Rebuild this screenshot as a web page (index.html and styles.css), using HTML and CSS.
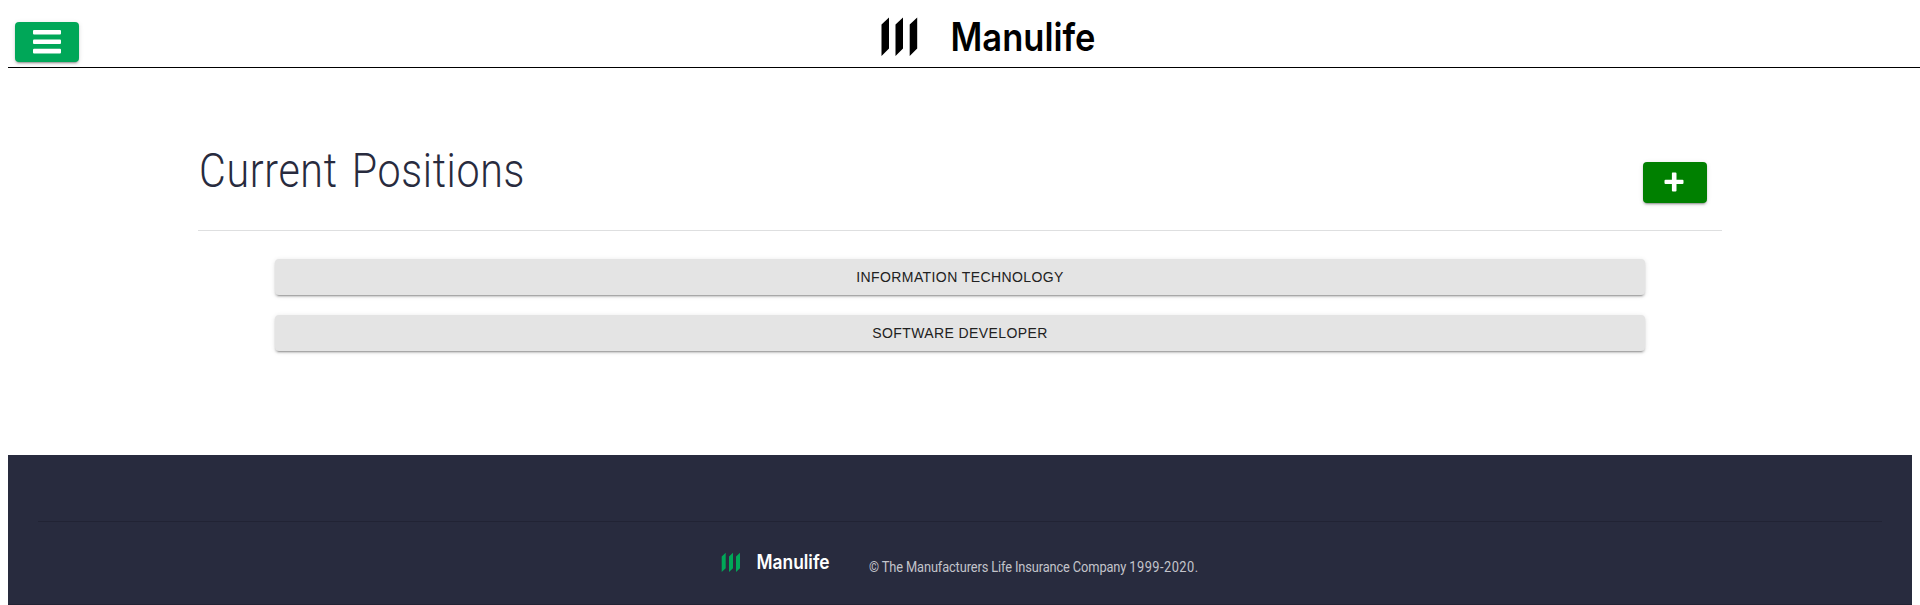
FILE: index.html
```html
<!DOCTYPE html>
<html lang="en">
<head>
<meta charset="utf-8">
<title>Current Positions</title>
<link rel="stylesheet" href="styles.css">
</head>
<body>
<header class="topbar">
  <button class="btn menu-btn" aria-label="Menu">
    <svg width="28" height="24" viewBox="0 0 28 24" fill="#fff"><rect width="28" height="4.6" rx="1"/><rect y="9.4" width="28" height="4.6" rx="1"/><rect y="18.8" width="28" height="4.6" rx="1"/></svg>
  </button>
  <svg class="logo" width="224" height="50" viewBox="0 0 224 50">
    <path d="M1.5 10.500L9 3.500V34.500L1.500 42ZM15.500 10.500L23 3.500V34.500L15.500 42ZM29.700 10.500L37.200 3.500V34.500L29.700 42Z"/>
    <text class="wordmark" x="70.500" y="37" font-size="39" textLength="145" lengthAdjust="spacingAndGlyphs">Manulife</text>
  </svg>
</header>
<main class="content">
  <div class="heading-row">
    <h1 class="title">Current Positions</h1>
    <button class="btn add-btn" aria-label="Add position">
      <svg width="20" height="20" viewBox="0 0 20 20" fill="#fff"><path d="M8.500 0.500H11.500Q12.500 0.500 12.500 1.500V7.700H18.500Q19.500 7.700 19.500 8.700V10.900Q19.500 11.900 18.500 11.900H12.500V18.500Q12.500 19.500 11.500 19.500H8.900Q7.900 19.500 7.900 18.500V11.900H1.500Q.5 11.900 .5 10.900V8.700Q.5 7.700 1.500 7.700H7.900V1.500Q7.900 .5 8.500 .5Z"/></svg>
    </button>
  </div>
  <div class="positions">
    <button class="position">Information Technology</button>
    <button class="position">Software Developer</button>
  </div>
</main>
<footer class="footer">
  <div class="footer-rule"></div>
  <div class="footer-row">
    <svg class="footer-logo" width="114" height="30" viewBox="0 0 114 30">
      <path fill="#00a758" d="M.700 5.500L4.700 1.700V17.200L.700 21ZM8 5.500L12 1.700V17.200L8 21ZM15 5.500L19 1.700V17.200L15 21Z"/>
      <text class="wordmark" fill="#fff" x="35.500" y="18" font-size="19.500" textLength="73" lengthAdjust="spacingAndGlyphs">Manulife</text>
    </svg>
    <span class="copyright">© The Manufacturers Life Insurance Company <span class="years">1999-2020.</span></span>
  </div>
</footer>
</body>
</html>
```
FILE: styles.css
```css
* { box-sizing: border-box; }
body { margin: 0; padding-left: 8px; height: 605px; overflow: hidden; background: #fff; }
button { border: 0; padding: 0; }
svg { overflow: visible; }
.topbar { height: 68px; border-bottom: 1px solid #000; display: grid; grid-template-columns: 872px 1fr; align-items: start; }
.btn { display: flex; align-items: center; justify-content: center; width: 64px; border-radius: 4px; box-shadow: 0 3px 1px -2px rgba(0,0,0,.2), 0 2px 2px rgba(0,0,0,.14), 0 1px 5px rgba(0,0,0,.12); }
.menu-btn { height: 40px; margin: 22px 0 0 7px; background: #00a758; }
.add-btn { height: 41px; margin: 34px 15px 0 0; padding: 0 2px 1px 0; background: #008000; }
.logo { margin-top: 14px; }
.wordmark { font-family: Inter, sans-serif; font-weight: 600; }
.content { width: 1524px; height: 387px; margin-left: 190px; padding-top: 60px; }
.heading-row { height: 103px; display: flex; justify-content: space-between; align-items: flex-start; border-bottom: 1px solid #dedfe0; }
.title { margin: 15px 0 0 1px; font: 300 48px/56px Roboto, sans-serif; color: #282b3e; letter-spacing: .8px; word-spacing: 4px; white-space: nowrap; transform: scaleX(.857); transform-origin: left; }
.positions { display: flex; flex-direction: column; gap: 20px; padding: 28px 77px 0; }
.position { height: 36px; border-radius: 4px; background: #e4e4e4; color: #212121; font: 14px/36px "Liberation Sans", sans-serif; letter-spacing: .4px; text-transform: uppercase; box-shadow: 0 3px 1px -2px rgba(0,0,0,.2), 0 2px 2px rgba(0,0,0,.14), 0 1px 5px rgba(0,0,0,.12); }
.footer { width: 1904px; height: 150px; padding: 66px 30px 0; background: #282b3e; border-bottom: 1px solid #212334; }
.footer-rule { height: 1px; background: #212334; }
.footer-row { display: flex; padding: 29px 0 0 683px; }
.copyright { margin: 6px 0 0 34px; font: 14px/20px Roboto, sans-serif; letter-spacing: -.13px; color: #c3c4cb; white-space: nowrap; transform-origin: left; transform: scaleX(.916); }
.years { letter-spacing: .5px; }
```
